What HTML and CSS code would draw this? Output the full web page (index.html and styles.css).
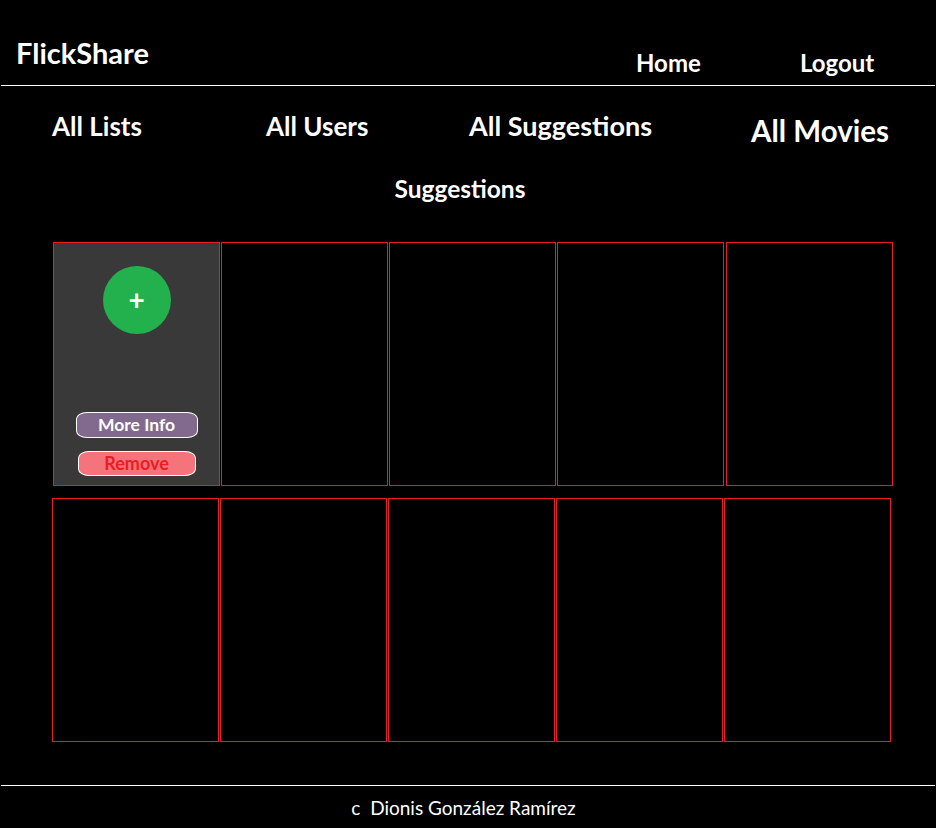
FILE: index.html
```html
<!DOCTYPE html>
<html lang="en">
<head>
<meta charset="utf-8">
<title>FlickShare - Suggestions</title>
<link rel="stylesheet" href="styles.css">
</head>
<body>
<header class="topbar">
  <div class="brand">FlickShare</div>
  <nav class="toplinks">
    <a class="toplink" href="#">Home</a>
    <a class="toplink" href="#">Logout</a>
  </nav>
</header>
<nav class="mainnav">
  <a class="navlink" href="#">All Lists</a>
  <a class="navlink" href="#">All Users</a>
  <a class="navlink navlink-wide" href="#">All Suggestions</a>
  <a class="navlink navlink-big" href="#">All Movies</a>
</nav>
<h2 class="section-title">Suggestions</h2>
<main class="cards">
  <div class="card-row card-row-first">
    <div class="card card-filled">
      <div class="add-btn">+</div>
      <button class="btn btn-info">More Info</button>
      <button class="btn btn-remove">Remove</button>
    </div>
    <div class="card"></div>
    <div class="card"></div>
    <div class="card"></div>
    <div class="card card-last"></div>
  </div>
  <div class="card-row card-row-second">
    <div class="card"></div>
    <div class="card"></div>
    <div class="card"></div>
    <div class="card"></div>
    <div class="card"></div>
  </div>
</main>
<footer class="footer">c&nbsp; Dionis González Ramírez</footer>
</body>
</html>
```
FILE: styles.css
```css
* { box-sizing: border-box; }
html, body { margin: 0; padding: 0; background: #000; }
body {
  width: 936px;
  height: 828px;
  overflow: hidden;
  font-family: Lato, "Open Sans", sans-serif;
  color: #fff;
  display: flex;
  flex-direction: column;
}
a { color: #fff; text-decoration: none; }

.topbar {
  display: flex;
  align-items: flex-start;
  height: 86px;
  margin: 0 1px;
  border-bottom: 1px solid #fff;
}
.brand {
  margin: 38px 0 0 15px;
  font-size: 29px;
  font-weight: 700;
  line-height: 1;
}
.toplinks {
  margin-left: auto;
  width: 299px;
  margin-top: 51px;
  display: grid;
  grid-template-columns: 164px auto;
}
.toplink {
  font-size: 24px;
  font-weight: 700;
  line-height: 1;
}

.mainnav {
  display: grid;
  grid-template-columns: 214px 203px 282px 1fr;
  padding: 27px 0 0 52px;
  align-items: start;
}
.navlink {
  font-size: 26px;
  font-weight: 700;
  line-height: 1;
}
.navlink-wide {
  font-size: 27px;
  margin-top: -1px;
}
.navlink-big {
  font-size: 29.5px;
  margin-top: 3px;
}

.section-title {
  margin: 31px 0 0;
  padding-right: 16px;
  text-align: center;
  font-size: 24.5px;
  font-weight: 700;
  line-height: 1;
}

.cards {
  margin-top: 40.5px;
  display: flex;
  flex-direction: column;
  gap: 12px;
}
.card-row {
  display: flex;
  gap: 1px;
}
.card-row-first { padding-left: 53px; }
.card-row-second { padding-left: 52px; }
.card {
  width: 167px;
  height: 244px;
  border: 1px solid #ed1c24;
  background: #000;
}
.card-last { margin-left: 1px; }
.card-filled {
  background: #393939;
  display: flex;
  flex-direction: column;
  align-items: center;
}
.add-btn {
  width: 68px;
  height: 68px;
  margin-top: 23px;
  border-radius: 50%;
  background: #22b14c;
  color: #fff;
  font-size: 28px;
  font-weight: 700;
  line-height: 66px;
  text-align: center;
}
.btn {
  font-family: Lato, "Open Sans", sans-serif;
  font-weight: 700;
  border: 1px solid #fff;
  border-radius: 11px / 7px;
  padding: 0;
  line-height: 1;
}
.btn-info {
  width: 122px;
  height: 26px;
  margin-top: 78px;
  background: #826a8e;
  color: #fff;
  font-size: 17.5px;
}
.btn-remove {
  width: 118px;
  height: 25px;
  margin-top: 13px;
  background: #f5737a;
  color: #ed1c24;
  font-size: 18px;
}

.footer {
  margin: auto 1px 0;
  height: 43px;
  border-top: 1px solid #fff;
  text-align: center;
  padding: 12px 9px 0 0;
  font-size: 19px;
  line-height: 1;
}
```
